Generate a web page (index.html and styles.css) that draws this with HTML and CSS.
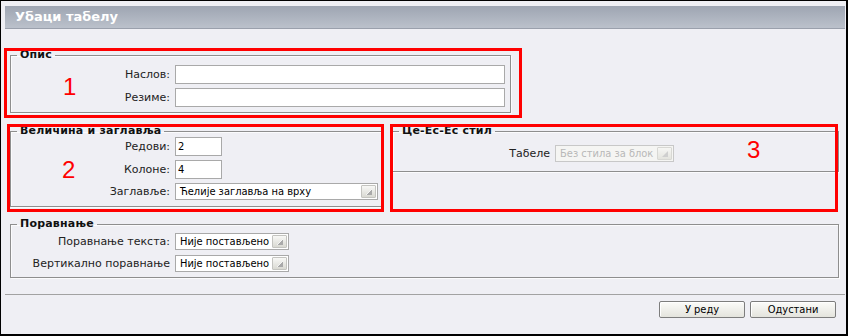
FILE: index.html
```html
<!DOCTYPE html>
<html lang="sr">
<head>
<meta charset="utf-8">
<title>Убаци табелу</title>
<link rel="stylesheet" href="styles.css">
</head>
<body>
<div class="dialog">
  <div class="titlebar">Убаци табелу</div>
  <div class="content">
    <fieldset class="fs fs-desc">
      <legend>Опис</legend>
      <div class="form">
        <label>Наслов:</label><input class="text wide" type="text">
        <label>Резиме:</label><input class="text wide" type="text">
      </div>
    </fieldset>
    <div class="row2">
      <fieldset class="fs fs-size">
        <legend>Величина и заглавља</legend>
        <div class="form">
          <label>Редови:</label><input class="text small" type="text" value="2">
          <label>Колоне:</label><input class="text small" type="text" value="4">
          <label>Заглавље:</label>
          <div class="select sel-head"><span class="sel-text">Ћелије заглавља на врху</span><span class="sel-btn"><svg width="8" height="8" viewBox="0 0 8 8"><polygon points="1,7 7,7 7,1" fill="#a9a9a9"/><polyline points="1,7 7,1" stroke="#fff" stroke-width="0.8" fill="none"/></svg></span></div>
        </div>
      </fieldset>
      <fieldset class="fs fs-css">
        <legend>Це-Ес-Ес стил</legend>
        <div class="form form-css">
          <label>Табеле</label>
          <div class="select sel-css disabled"><span class="sel-text">Без стила за блок</span><span class="sel-btn"><svg width="8" height="8" viewBox="0 0 8 8"><polygon points="1,7 7,7 7,1" fill="#cfcfcf"/></svg></span></div>
        </div>
      </fieldset>
    </div>
    <fieldset class="fs fs-align">
      <legend>Поравнање</legend>
      <div class="form form-align">
        <label>Поравнање текста:</label>
        <div class="select sel-align"><span class="sel-text">Није постављено</span><span class="sel-btn"><svg width="8" height="8" viewBox="0 0 8 8"><polygon points="1,7 7,7 7,1" fill="#a9a9a9"/><polyline points="1,7 7,1" stroke="#fff" stroke-width="0.8" fill="none"/></svg></span></div>
        <label>Вертикално поравнање</label>
        <div class="select sel-align"><span class="sel-text">Није постављено</span><span class="sel-btn"><svg width="8" height="8" viewBox="0 0 8 8"><polygon points="1,7 7,7 7,1" fill="#a9a9a9"/><polyline points="1,7 7,1" stroke="#fff" stroke-width="0.8" fill="none"/></svg></span></div>
      </div>
    </fieldset>
  </div>
  <div class="sep"></div>
  <div class="buttons">
    <button class="btn" type="button">У реду</button>
    <button class="btn" type="button">Одустани</button>
  </div>

  <div class="mark mark1"></div>
  <div class="mark mark2"></div>
  <div class="mark mark3"></div>
  <span class="num num1">1</span>
  <span class="num num2">2</span>
  <span class="num num3">3</span>
</div>
</body>
</html>
```

FILE: styles.css
```css
html, body {
  margin: 0;
  padding: 0;
  background: #efeff4;
}

.dialog {
  position: relative;
  box-sizing: border-box;
  width: 848px;
  height: 336px;
  border-style: solid;
  border-color: #000;
  border-width: 1px 2px 2px 1px;
  background: #efeff4;
  font-family: "DejaVu Sans", Verdana, sans-serif;
  font-size: 11px;
  color: #222;
  overflow: hidden;
}

.titlebar {
  margin: 5px 1px 0 4px;
  height: 22px;
  line-height: 22px;
  padding-left: 10px;
  background: linear-gradient(#9ea5b2, #bbc1cb);
  border-bottom: 1px solid #9aa0ac;
  color: #fff;
  font-weight: bold;
  font-size: 13px;
}

.content {
  padding: 20px 7px 0 9px;
}

.fs {
  margin: 0;
  padding: 0 0 5px 0;
  border: 1px solid #8e8e8e;
  box-shadow: inset 1px 1px 0 #fbfbfd, 1px 1px 0 #fbfbfd;
  min-width: 0;
  box-sizing: border-box;
}

.fs legend {
  margin-left: 6px;
  padding: 0 3px;
  font-weight: bold;
  font-size: 11px;
  line-height: 12px;
  letter-spacing: 0.2px;
  color: #111;
}

.form {
  display: grid;
  grid-template-columns: 159px auto;
  column-gap: 5px;
  row-gap: 4px;
  align-items: center;
  justify-content: start;
}

.form label {
  text-align: right;
  white-space: nowrap;
}

.fs-desc {
  width: 501px;
  padding-top: 4px;
  padding-bottom: 5px;
}

.row2 {
  display: grid;
  grid-template-columns: 372px 447px;
  column-gap: 10px;
  align-items: start;
  margin-top: 12px;
}

.fs-size {
  padding-top: 0;
  padding-bottom: 6px;
}

.fs-css {
  padding-top: 8px;
  padding-bottom: 9px;
}

.form-css {
  grid-template-columns: 157px auto;
}

.fs-align {
  margin-top: 11px;
  padding-top: 3px;
  padding-bottom: 5px;
}

.form-align {
  row-gap: 5px;
}

.text {
  box-sizing: border-box;
  height: 19px;
  margin: 0;
  padding: 0 2px;
  border: 1px solid #a9a9a9;
  background: #fff;
  font-family: "DejaVu Sans Condensed", "Liberation Sans", sans-serif;
  font-size: 11px;
  color: #000;
  outline: none;
}

.text.wide {
  width: 330px;
}

.text.small {
  width: 47px;
}

.select {
  box-sizing: border-box;
  height: 17px;
  display: flex;
  align-items: stretch;
  border: 1px solid #a9a9a9;
  background: #fff;
  font-family: "DejaVu Sans Condensed", "Liberation Sans", sans-serif;
  font-size: 11px;
  color: #000;
}

.sel-text {
  flex: 1;
  padding-left: 4px;
  line-height: 15px;
  white-space: nowrap;
  overflow: hidden;
}

.sel-btn {
  width: 15px;
  margin: 1px;
  box-sizing: border-box;
  border: 1px solid #c4c4c0;
  border-radius: 1px;
  background: linear-gradient(#f8f8f6, #d9d9d2);
  display: flex;
  align-items: center;
  justify-content: center;
}

.sel-head {
  width: 203px;
}

.sel-css {
  width: 119px;
}

.sel-align {
  width: 114px;
}

.select.disabled {
  border-color: #c8c8c8;
  background: #f5f5f3;
  color: #b8b8b8;
}

.select.disabled .sel-btn {
  border-color: #d8d8d4;
  background: linear-gradient(#f6f6f4, #e4e4de);
}

.sep {
  margin: 16px 1px 0 4px;
  height: 1px;
  background: #a2a2a2;
}

.buttons {
  display: flex;
  justify-content: flex-end;
  gap: 5px;
  padding: 6px 10px 0 0;
}

.btn {
  box-sizing: border-box;
  width: 86px;
  height: 17px;
  margin: 0;
  padding: 0;
  border: 1px solid #7d7d7d;
  border-radius: 2px;
  background: linear-gradient(#fbfbf9, #e4e4dd);
  box-shadow: inset 1px 1px 0 #fff;
  font-family: "DejaVu Sans Condensed", "Liberation Sans", sans-serif;
  font-size: 11px;
  line-height: 15px;
  color: #000;
}

/* red annotation overlays */
.mark {
  position: absolute;
  box-sizing: border-box;
  border: 3px solid #ff0000;
}

.mark1 {
  left: 3px;
  top: 47px;
  width: 518px;
  height: 70px;
}

.mark2 {
  left: 6px;
  top: 123px;
  width: 377px;
  height: 88px;
}

.mark3 {
  left: 389px;
  top: 123px;
  width: 448px;
  height: 88px;
}

.num {
  position: absolute;
  font-family: "Liberation Sans", Arial, sans-serif;
  font-size: 24px;
  line-height: 24px;
  color: #ff0000;
}

.num1 {
  left: 62px;
  top: 74px;
}

.num2 {
  left: 61px;
  top: 157px;
}

.num3 {
  left: 746px;
  top: 137px;
}
```
